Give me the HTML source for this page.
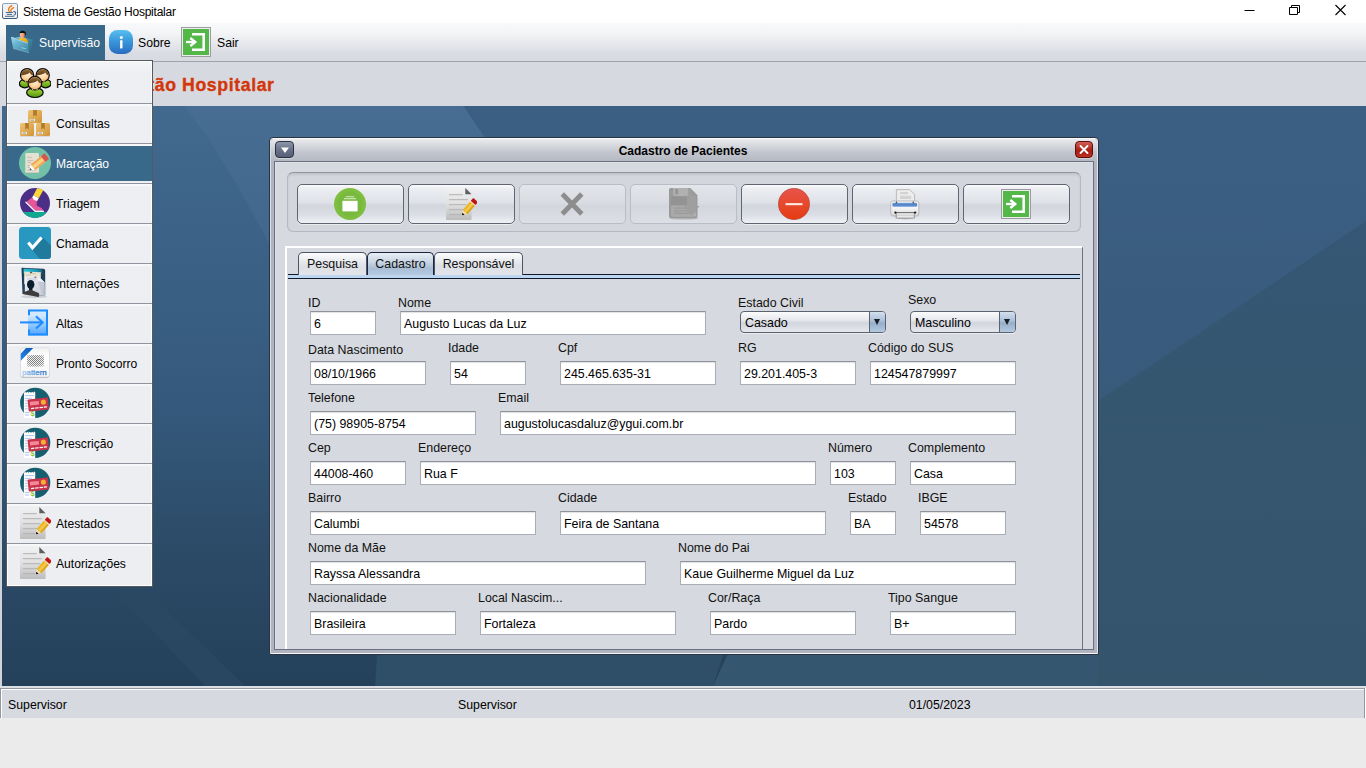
<!DOCTYPE html>
<html><head><meta charset="utf-8"><title>Sistema de Gestão Hospitalar</title>
<style>
*{box-sizing:border-box;margin:0;padding:0}
html,body{width:1366px;height:768px;overflow:hidden;background:#ebebeb;font-family:"Liberation Sans",sans-serif;font-size:12px;color:#000}
.abs{position:absolute}
#titlebar{position:absolute;left:0;top:0;width:1366px;height:23px;background:#fff}
#titlebar .t{position:absolute;left:23px;top:5px;font-size:12px;line-height:15px;color:#000;white-space:nowrap;letter-spacing:-0.24px}
#menubar{position:absolute;left:0;top:23px;width:1366px;height:39px;background:linear-gradient(#f8f9fa 0%,#f4f5f6 25%,#e6e8ec 55%,#d9dce2 80%,#d7dae0 100%);border-bottom:1px solid #9ea2ab}
#msel{position:absolute;left:6px;top:2px;width:99px;height:35px;background:#39698a}
.mtxt{position:absolute;top:13px;font-size:12.2px;line-height:15px;white-space:nowrap}
#header{position:absolute;left:0;top:62px;width:1366px;height:44px;background:#d6d9df}
#header .h{position:absolute;right:1092px;top:12px;font-size:17.7px;font-weight:bold;line-height:22px;color:#d3360b;-webkit-text-stroke:.35px #d3360b;white-space:nowrap;letter-spacing:.6px;margin-right:-.6px}
#desk{position:absolute;left:0;top:106px;width:1366px;height:580px;background:#3a5f82;overflow:hidden}
#status{position:absolute;left:0;top:686px;width:1366px;height:32px;background:#dcdfe4}
#status .in{position:absolute;left:0;top:2px;width:1365px;height:30px;background:#d6d9df;border:1px solid #93979f;border-bottom:none;box-shadow:inset 1px 1px 0 #fff,1px 0 0 #fff}
#status span{position:absolute;top:12px;font-size:12.3px;line-height:15px;white-space:nowrap}
#popup{position:absolute;left:6px;top:60px;width:147px;height:527px;background:linear-gradient(#f4f5f7 0,#eeeff3 12px,#edeef2 100%);border:1px solid #555960;box-shadow:inset 1px 1px 0 #fdfdfe,inset -1px -1px 0 #fdfdfe}
.mi{position:absolute;left:0;width:145px;height:35px}
.mi span{position:absolute;left:49px;top:11px;font-size:12.1px;line-height:15px;white-space:nowrap;color:#000}
.mi.sel{background:#39698a}
.mi.sel span{color:#fff}
.sep{position:absolute;left:0;width:145px;height:3px;background:#f7f8fa;border-top:1px solid #90949e}
.mi svg{position:absolute;left:12px;top:1px}

#frame{position:absolute;left:269px;top:137px;width:830px;height:518px;background:#b0b4c0;border:1px solid #2b3240;border-radius:4px 4px 2px 2px;box-shadow:inset 0 1px 0 #f8f9fa,inset 0 -1px 0 #f6f7f9,inset 1px 0 0 #dcdfe5,inset -1px 0 0 #e4e6eb}
#fin{position:absolute;left:-1px;top:-1px;width:830px;height:518px}
#ftitle{position:absolute;left:2px;top:2px;width:826px;height:23px;background:linear-gradient(#e9ebee 0%,#dcdee3 20%,#c4c7cf 55%,#b3b7c1 100%);border-radius:3px 3px 0 0}
#ftitle .tt{position:absolute;left:-1px;width:826px;top:5px;text-align:center;font-weight:bold;font-size:12px;line-height:14px;color:#000}
#fbody{position:absolute;left:5px;top:24px;width:820px;height:489px;background:#d6d9df;border:1px solid #6b7080;box-shadow:inset 1px 1px 0 #e0e2e7}
.sysbtn{position:absolute;top:2px;height:17px;border-radius:4px}
#fmenu{left:4px;width:19px;border:1px solid #2a3142;background:linear-gradient(#8e96aa,#6a7288 50%,#586078);box-shadow:0 1px 0 rgba(255,255,255,.35)}
#fclose{left:804px;width:18px;border:1px solid #5c0d08;background:linear-gradient(#cf6058,#b02a20 45%,#a81c12 60%,#bc3424);box-shadow:0 1px 0 rgba(255,255,255,.35)}
#tbpanel{position:absolute;left:18px;top:35px;width:794px;height:60px;border-radius:6px;border:1px solid #b4b8c0;border-top-color:#90949c;background:#d3d6dc;box-shadow:inset 0 2px 2px rgba(0,0,0,.08)}
.btn{position:absolute;top:47px;width:107px;height:40px;border:1px solid #5f6571;border-radius:5px;background:linear-gradient(#fbfbfc 0%,#eceef2 10%,#dfe2e8 45%,#d2d5dd 55%,#dcdfe6 80%,#eff1f5 100%);box-shadow:0 1px 0 rgba(255,255,255,.5)}
.btn.dis{border-color:#b9bdc6;background:linear-gradient(#e3e5ea 0%,#d9dce2 45%,#d3d6dd 55%,#dcdfe5 100%);box-shadow:none}
.btn svg{position:absolute}
#tabpane{position:absolute;left:16px;top:109px;width:798px;height:403px;border:2px solid #fff;border-bottom:none;border-right:1px solid #6f737d}
.tab{position:absolute;top:115px;height:23px;border:1px solid #4d5566;border-bottom:none;border-radius:5px 5px 0 0;background:linear-gradient(#fdfdfe 0%,#eceef1 30%,#dcdfe5 60%,#e3e5ea 100%);font-size:12.4px;line-height:14px;text-align:center;padding-top:4px;color:#111}
.tab.sel{border-color:#1b2740;background:linear-gradient(#e8eef5 0%,#c9d6e4 40%,#a9bed5 70%,#b5cbe3 100%)}
#tabline{position:absolute;left:19px;top:137px;width:792px;height:5px;background:#bcd6f0;border-top:1px solid #10182c;border-bottom:1px solid #10182c}
.combo{position:absolute;height:22px;border:1px solid #5b6270;border-radius:4px;background:linear-gradient(#fbfbfc 0%,#e6e8ed 40%,#d2d5dd 55%,#e6e8ee 100%);font-size:12.4px;line-height:14px;padding:4px 0 0 4px;box-shadow:0 1px 0 rgba(255,255,255,.5)}
.combo i{position:absolute;right:0;top:0;width:16px;height:20px;border-left:1px solid #5b6270;border-radius:0 3px 3px 0;background:linear-gradient(#d4e0ee 0%,#a9bfd8 45%,#94aeca 55%,#b4cae2 100%)}
.combo i:after{content:"";position:absolute;left:4px;top:7px;border:3.5px solid transparent;border-top:6.5px solid #1a1d24;border-bottom:none}
.lbl{position:absolute;font-size:12.4px;line-height:14px;white-space:nowrap;color:#111}
.tf{position:absolute;height:24px;background:#fff;border:1px solid #a9adb5;border-top-color:#8e929a;box-shadow:inset 0 1px 1px rgba(0,0,0,.12);font-size:12.4px;line-height:14px;padding:5px 0 0 3px;white-space:nowrap;overflow:hidden;color:#000}
</style></head><body>
<div id="titlebar"><div class="abs" style="left:2px;top:3px;width:16px;height:16px"><svg width="16" height="16" viewBox="0 0 16 16"><defs><linearGradient id="jb" x1="0" y1="0" x2="0" y2="1"><stop offset="0" stop-color="#8aa6c2"/><stop offset="1" stop-color="#3a5a78"/></linearGradient></defs>
<rect x=".5" y=".5" width="15" height="15" rx="1.500" fill="#f1f1f1" stroke="url(#jb)" stroke-width="1"/>
<path d="M9.800 2.600c-3.200 2-4.200 3.800-2.600 5.800M11.600 4.600c-2.800 1.500-3.400 2.700-2.300 4.300" stroke="#e8781a" stroke-width="1.300" fill="none" stroke-linecap="round"/>
<path d="M4.200 9.500h6.300M5.200 11.400h4.400M3.400 13.300h8.400" stroke="#4a6a8c" stroke-width="1" stroke-linecap="round"/>
<path d="M11.400 8.400c3 .2 3 3.400 0 3.800" stroke="#4a6a8c" stroke-width="1.100" fill="none"/></svg></div><div class="t">Sistema de Gestão Hospitalar</div>
<svg class="abs" style="left:1230px;top:0" width="136" height="23" viewBox="1230 0 136 23"><path d="M1244.500 10.500h10" stroke="#000" stroke-width="1"/>
<path d="M1289.500 7.500h8v7h-8zM1291.500 7.500v-2h8v7h-2" fill="none" stroke="#000" stroke-width="1"/>
<path d="M1335.500 5l10 10M1345.500 5l-10 10" stroke="#000" stroke-width="1.100"/></svg></div>
<div id="menubar"><div id="msel"></div>
<div class="abs" style="left:10px;top:7px;width:24px;height:24px"><svg width="24" height="24" viewBox="0 0 24 24"><defs>
<linearGradient id="fg" x1="0" y1="0" x2=".9" y2="1"><stop offset="0" stop-color="#a6dcf0"/><stop offset=".35" stop-color="#6ab6d2"/><stop offset="1" stop-color="#3c88a6"/></linearGradient>
<linearGradient id="fb" x1="0" y1="0" x2="1" y2="1"><stop offset="0" stop-color="#5aa4c0"/><stop offset="1" stop-color="#2a6680"/></linearGradient>
<linearGradient id="fs" x1="0" y1="0" x2="1" y2="0"><stop offset="0" stop-color="#fbc0a0"/><stop offset=".6" stop-color="#f4a27c"/><stop offset="1" stop-color="#c87850"/></linearGradient>
<linearGradient id="fy" x1="0" y1="0" x2="1" y2="1"><stop offset="0" stop-color="#ffc81e"/><stop offset="1" stop-color="#f09a00"/></linearGradient></defs>
<path d="M5.800 7.400l4.400-.6l6 1.200l6.500 1.800l-1.300 9.500l-2.300 3.400z" fill="url(#fb)"/>
<path d="M5.800 7.400l4.400-.6l5.400 1.100l-1 3z" fill="#7cc0d8"/>
<path d="M9.600 3.400c-.3-2.300 2.400-3 4.400-2.300c1.800 .6 2.200 2.200 1.700 4l-.9 .2l-.4-2.200z" fill="#0c0c0c"/>
<path d="M9.800 3.300c1.600-.5 3.200-.5 4.500-.2l.4 2.200c-.2 1.600-.8 2.600-1.500 3.100l-.2 1.200l-2 -.3l.2-1.400c-1-.8-1.500-2.400-1.400-4.600z" fill="url(#fs)"/>
<path d="M8.100 9.300l2.200-1.400l1.200 .3l1.400 1l1-1.100l1.200-.1c1.400 .8 2.400 2 2.800 3.400v1.500z" fill="url(#fy)"/>
<path d="M1 7l4.600 .9l2.900 1.850l9.400 2.950l1.200 10l-16-4.200z" fill="url(#fg)"/>
<path d="M1 7l4.600 .9l2.900 1.850l9.400 2.950l.1 .7l-9.600-3l-2.900-1.800l-4.300-.8z" fill="#c8ecf8" opacity=".75"/>
<path d="M3.100 18.500l16 4.200" stroke="#9ab4c0" stroke-width=".7" opacity=".8"/>
<path d="M11.500 17.600l4.600 1.300" stroke="#b4e0ee" stroke-width="1" opacity=".75"/></svg></div>
<div class="abs" style="left:109px;top:7px;width:24px;height:24px"><svg width="24" height="24" viewBox="0 0 24 24"><defs>
<linearGradient id="sg" x1="0" y1="0" x2="0" y2="1"><stop offset="0" stop-color="#58c0ee"/><stop offset=".45" stop-color="#3a98dc"/><stop offset="1" stop-color="#2a6cc0"/></linearGradient></defs>
<rect width="24" height="24" rx="8.500" fill="url(#sg)"/>
<circle cx="12.300" cy="7.600" r="1.500" fill="#fff"/><rect x="11.100" y="10" width="2.400" height="8.600" rx="1.200" fill="#fff"/></svg></div>
<div class="abs" style="left:181px;top:4px;width:30px;height:30px"><svg width="30" height="30" viewBox="0 0 30 30"><rect x=".5" y=".5" width="29" height="29" fill="#ececee" stroke="#9c9c9e" stroke-width="1"/>
<rect x="2" y="2" width="26" height="26" fill="#54b848"/>
<path d="M11 7.300h11.700v15.400h-11.700" fill="none" stroke="#fff" stroke-width="2.600"/>
<path d="M5 15h9" stroke="#fff" stroke-width="2.300"/><path d="M9.300 11l5 4l-5 4" fill="none" stroke="#fff" stroke-width="2.300" stroke-linejoin="miter"/></svg></div>
<div class="mtxt" style="left:39px;color:#fff">Supervisão</div>
<div class="mtxt" style="left:138px">Sobre</div>
<div class="mtxt" style="left:217px">Sair</div>
</div>
<div id="header"><div class="h">Sistema de Gestão Hospitalar</div></div>
<div id="desk"><svg width="1366" height="580" viewBox="0 106 1366 580" style="position:absolute;left:0;top:0">
<defs>
<linearGradient id="bgL" x1="0" y1="106" x2="0" y2="686" gradientUnits="userSpaceOnUse"><stop offset="0" stop-color="#426a8e"/><stop offset=".25" stop-color="#3b6286"/><stop offset=".54" stop-color="#34587a"/><stop offset=".78" stop-color="#2b4a66"/><stop offset="1" stop-color="#25415a"/></linearGradient>
<linearGradient id="bgR" x1="0" y1="106" x2="0" y2="686" gradientUnits="userSpaceOnUse"><stop offset="0" stop-color="#3b5f83"/><stop offset=".5" stop-color="#385b7c"/><stop offset="1" stop-color="#35566f"/></linearGradient>
<linearGradient id="bgR2" x1="0" y1="106" x2="0" y2="686" gradientUnits="userSpaceOnUse"><stop offset="0" stop-color="#36587a"/><stop offset=".5" stop-color="#35566f"/><stop offset="1" stop-color="#34546c"/></linearGradient>
<linearGradient id="band" x1="0" y1="106" x2="0" y2="400" gradientUnits="userSpaceOnUse"><stop offset="0" stop-color="#476e92"/><stop offset=".5" stop-color="#41688c"/><stop offset="1" stop-color="#3a6084"/></linearGradient>
</defs>
<rect x="0" y="106" width="1366" height="580" fill="url(#bgL)"/>
<polygon points="184,106 463.500,106 540,220 540,420 360,420 270,245 240,190 208,138" fill="url(#band)"/>
<polygon points="463.500,106 1366,106 1366,686 713,686 728,654 728,300 560,250" fill="url(#bgR)"/>
<polygon points="1098,401 1366,221 1366,686 1098,686" fill="url(#bgR2)"/>
<polygon points="375,686 378,640 728,640 713,686" fill="#2f4e67"/>
<polygon points="100,575 130,575 245,686 205,686" fill="#2a4962" opacity=".8"/>
<rect x="0" y="106" width="2" height="580" fill="#d0d3da"/>
</svg></div>

<div id="status"><div class="in"></div><span style="left:8px">Supervisor</span><span style="left:458px">Supervisor</span><span style="left:909px">01/05/2023</span></div>
<div id="frame"><div id="fin"><div id="ftitle"><div class="tt">Cadastro de Pacientes</div>
<div class="sysbtn" id="fmenu"><svg width="17" height="15" style="position:absolute;left:0;top:0"><path d="M5 5.500h8l-4 5.500z" fill="#fff"/></svg></div>
<div class="sysbtn" id="fclose"><svg width="16" height="15" style="position:absolute;left:0;top:0"><path d="M4.500 4l7 7M11.500 4l-7 7" stroke="#fff" stroke-width="1.900" stroke-linecap="round"/></svg></div>
</div>
<div id="fbody"></div>
<div id="tbpanel"></div>
<div class="btn" id="b1" style="left:28px"><svg style="left:36px;top:3px" width="32" height="32" viewBox="0 0 32 32"><circle cx="16" cy="16" r="16" fill="#7fbf3f"/><circle cx="16" cy="16" r="12.600" fill="#79b940"/>
<rect x="8.400" y="12.800" width="15.200" height="10.600" fill="#fff"/><rect x="10" y="10.200" width="12" height="1" fill="#dff0cf"/><rect x="11.800" y="8.200" width="8.400" height="1" fill="#cfe8b8"/></svg></div>
<div class="btn" id="b2" style="left:139px"><svg style="left:36px;top:3px" width="32" height="32" viewBox="0 0 32 32"><defs>
<linearGradient id="dg" x1="0" y1="0" x2="0" y2="1"><stop offset="0" stop-color="#f1f1f1"/><stop offset=".5" stop-color="#e0e0e0"/><stop offset="1" stop-color="#bdbdbd"/></linearGradient></defs>
<path d="M1 0h19.300l6.300 6.300v24.700a1 1 0 0 1-1 1h-23.600a1 1 0 0 1-1-1z" fill="url(#dg)"/>
<path d="M20.300 0l6.300 6.300h-6.300z" fill="#5e5e5e"/>
<path d="M4 6.700h13.800M4 11.700h19M4 16.700h17.500M4 21.700h14M4 26.700h12.500" stroke="#b2b2b2" stroke-width="1"/>
<g transform="translate(17.100,27.300) rotate(-48.500)">
<path d="M0 0l4.400-3.200v6.400z" fill="#f3ddb0"/><path d="M0 0l2.100-1.520v3.040z" fill="#0a0a0a"/>
<rect x="4.400" y="-3.200" width="11.200" height="6.400" fill="#eab625"/><rect x="4.400" y="-1.100" width="11.200" height="2.200" fill="#f2c94c"/><rect x="4.400" y="1.700" width="11.200" height="1.500" fill="#d9a21c"/>
<rect x="15.600" y="-3.200" width="1" height="6.400" fill="#f4e6c8"/><rect x="16.600" y="-3.200" width="3.800" height="6.400" rx=".7" fill="#c01414"/></g></svg></div>
<div class="btn dis" id="b3" style="left:250px"><svg style="left:36px;top:3px" width="32" height="32" viewBox="0 0 32 32"><path d="M6.300 6l19.500 20M25.800 6l-19.500 20" stroke="#8d8d8d" stroke-width="4.800"/></svg></div>
<div class="btn dis" id="b4" style="left:361px"><svg style="left:36px;top:3px" width="34" height="32" viewBox="0 0 34 32"><g transform="translate(1.300,0)">
<ellipse cx="15.500" cy="30.600" rx="15" ry=".9" fill="#a8a8a8" opacity=".7"/>
<path d="M2.500 0h19.500l7.200 7.200v21.300a1.800 1.800 0 0 1-1.800 1.800h-24.900a1.800 1.800 0 0 1-1.800-1.800v-26.700a1.800 1.800 0 0 1 1.800-1.800z" fill="#9a9a9a"/>
<path d="M4.800 0h17.200v6.600a1.300 1.300 0 0 1-1.300 1.300h-14.600a1.300 1.300 0 0 1-1.300-1.300z" fill="#b1b1b1"/><rect x="6.800" y="1" width="3.200" height="5.400" fill="#979797"/>
<rect x="19.600" y="0" width="2.400" height="7.900" fill="#9e9e9e"/>
<path d="M3 8.600h15.500v8.600h-15.500z" fill="#939393"/>
<rect x="2.800" y="17.400" width="24.600" height="11.300" rx="1" fill="#aaa"/>
<path d="M5.400 20.200h14M5.400 22.800h16M5.400 25.400h17" stroke="#9a9a9a" stroke-width="1.300"/>
<path d="M18.600 7.500h9.400v10.500h3.200l-8 10l-8-10h3.400z" fill="#9f9f9f"/><path d="M25.200 28l2.400-3.200v2.400a.8 .8 0 0 1-.8 .8z" fill="#b4b4b4"/></g></svg></div>
<div class="btn" id="b5" style="left:472px"><svg style="left:36px;top:3px" width="32" height="32" viewBox="0 0 32 32"><defs>
<linearGradient id="rg" x1="0" y1="0" x2="0" y2="1"><stop offset="0" stop-color="#e8544a"/><stop offset=".5" stop-color="#e6492e"/><stop offset="1" stop-color="#e53a12"/></linearGradient></defs>
<circle cx="16" cy="16" r="15.700" fill="url(#rg)" stroke="#b04a3a" stroke-width=".6"/><rect x="7.500" y="15.100" width="17" height="2.100" fill="#ffe9e2"/></svg></div>
<div class="btn" id="b6" style="left:583px"><svg style="left:36px;top:3px" width="32" height="32" viewBox="0 0 32 32"><defs>
<linearGradient id="prb" x1="0" y1="0" x2="0" y2="1"><stop offset="0" stop-color="#ffffff"/><stop offset=".55" stop-color="#f2f2f2"/><stop offset="1" stop-color="#d6d6d6"/></linearGradient>
<linearGradient id="prl" x1="0" y1="0" x2="0" y2="1"><stop offset="0" stop-color="#a9c6ea"/><stop offset=".35" stop-color="#4f7fc2"/><stop offset="1" stop-color="#6a9ada"/></linearGradient></defs>
<g transform="translate(.6,0)"><path d="M6.800 1.600h13.400l4.800 4.800v9h-18.200z" fill="#ececec" stroke="#b4b4b4" stroke-width=".9"/>
<path d="M10.500 4h8v2.200h-8zM10.500 7.800h11v3.200h-11z" fill="#d2d2d2"/>
<rect x="1.200" y="13" width="28" height="15" rx="2.200" fill="url(#prb)" stroke="#b2b2b2" stroke-width=".9"/>
<rect x="2.800" y="14.500" width="24.800" height="4.200" rx="1.200" fill="url(#prl)"/>
<path d="M6 15h1v-1.500M24.500 15h-1v-1.500" stroke="#333" stroke-width=".9" fill="none"/>
<path d="M6 24.600h19.400v5.800q-9.700 1.500-19.400 0z" fill="#a4a4a4"/>
<path d="M7.300 25h16.800v4.600h-16.800z" fill="#e8e8e8"/><path d="M7.300 27.200h16.800" stroke="#c8c8c8" stroke-width=".8"/>
<path d="M5.800 24.600h19.800" stroke="#6a6a6a" stroke-width="1"/><circle cx="5.800" cy="24.600" r="1.100" fill="#111"/><circle cx="25.600" cy="24.600" r="1.100" fill="#111"/></g></svg></div>
<div class="btn" id="b7" style="left:694px"><svg style="left:37px;top:4px" width="30" height="30" viewBox="0 0 30 30"><rect x=".5" y=".5" width="29" height="29" fill="#ececee" stroke="#9c9c9e" stroke-width="1"/>
<rect x="2" y="2" width="26" height="26" fill="#54b848"/>
<path d="M11 7.300h11.700v15.400h-11.700" fill="none" stroke="#fff" stroke-width="2.600"/>
<path d="M5 15h9" stroke="#fff" stroke-width="2.300"/><path d="M9.300 11l5 4l-5 4" fill="none" stroke="#fff" stroke-width="2.300" stroke-linejoin="miter"/></svg></div>
<div id="tabpane"></div>
<div id="tabline"></div>
<div class="tab" style="left:29px;width:69px">Pesquisa</div>
<div class="tab sel" style="left:98px;width:67px">Cadastro</div>
<div class="tab" style="left:165px;width:89px">Responsável</div>
<div class="combo" style="left:471px;top:174px;width:146px">Casado<i></i></div>
<div class="combo" style="left:641px;top:174px;width:106px">Masculino<i></i></div>
<div class="lbl" style="left:39px;top:159px">ID</div>
<div class="lbl" style="left:129px;top:159px">Nome</div>
<div class="lbl" style="left:469px;top:159px">Estado Civil</div>
<div class="lbl" style="left:639px;top:156px">Sexo</div>
<div class="lbl" style="left:39px;top:206px">Data Nascimento</div>
<div class="lbl" style="left:179px;top:204px">Idade</div>
<div class="lbl" style="left:289px;top:204px">Cpf</div>
<div class="lbl" style="left:469px;top:204px">RG</div>
<div class="lbl" style="left:599px;top:204px">Código do SUS</div>
<div class="lbl" style="left:39px;top:254px">Telefone</div>
<div class="lbl" style="left:229px;top:254px">Email</div>
<div class="lbl" style="left:39px;top:304px">Cep</div>
<div class="lbl" style="left:149px;top:304px">Endereço</div>
<div class="lbl" style="left:559px;top:304px">Número</div>
<div class="lbl" style="left:639px;top:304px">Complemento</div>
<div class="lbl" style="left:39px;top:354px">Bairro</div>
<div class="lbl" style="left:289px;top:354px">Cidade</div>
<div class="lbl" style="left:579px;top:354px">Estado</div>
<div class="lbl" style="left:649px;top:354px">IBGE</div>
<div class="lbl" style="left:39px;top:404px">Nome da Mãe</div>
<div class="lbl" style="left:409px;top:404px">Nome do Pai</div>
<div class="lbl" style="left:39px;top:454px">Nacionalidade</div>
<div class="lbl" style="left:209px;top:454px">Local Nascim...</div>
<div class="lbl" style="left:439px;top:454px">Cor/Raça</div>
<div class="lbl" style="left:619px;top:454px">Tipo Sangue</div>
<div class="tf" style="left:41px;top:174px;width:66px">6</div>
<div class="tf" style="left:131px;top:174px;width:306px">Augusto Lucas da Luz</div>
<div class="tf" style="left:41px;top:224px;width:116px">08/10/1966</div>
<div class="tf" style="left:181px;top:224px;width:76px">54</div>
<div class="tf" style="left:291px;top:224px;width:156px">245.465.635-31</div>
<div class="tf" style="left:471px;top:224px;width:116px">29.201.405-3</div>
<div class="tf" style="left:601px;top:224px;width:146px">124547879997</div>
<div class="tf" style="left:41px;top:274px;width:166px">(75) 98905-8754</div>
<div class="tf" style="left:231px;top:274px;width:516px">augustolucasdaluz@ygui.com.br</div>
<div class="tf" style="left:41px;top:324px;width:96px">44008-460</div>
<div class="tf" style="left:151px;top:324px;width:396px">Rua F</div>
<div class="tf" style="left:561px;top:324px;width:66px">103</div>
<div class="tf" style="left:641px;top:324px;width:106px">Casa</div>
<div class="tf" style="left:41px;top:374px;width:226px">Calumbi</div>
<div class="tf" style="left:291px;top:374px;width:266px">Feira de Santana</div>
<div class="tf" style="left:581px;top:374px;width:46px">BA</div>
<div class="tf" style="left:651px;top:374px;width:86px">54578</div>
<div class="tf" style="left:41px;top:424px;width:336px">Rayssa Alessandra</div>
<div class="tf" style="left:411px;top:424px;width:336px">Kaue Guilherme Miguel da Luz</div>
<div class="tf" style="left:41px;top:474px;width:146px">Brasileira</div>
<div class="tf" style="left:211px;top:474px;width:196px">Fortaleza</div>
<div class="tf" style="left:441px;top:474px;width:146px">Pardo</div>
<div class="tf" style="left:621px;top:474px;width:126px">B+</div>
</div></div>
<div id="popup"><div class="mi" style="top:5px"><svg width="32" height="32" viewBox="0 0 32 32"><defs>
<radialGradient id="pf" cx=".5" cy=".4" r=".65"><stop offset="0" stop-color="#fff2dc"/><stop offset=".5" stop-color="#ffd8a4"/><stop offset="1" stop-color="#f0a458"/></radialGradient>
<linearGradient id="pg" x1="0" y1="0" x2="0" y2="1"><stop offset="0" stop-color="#b4de3c"/><stop offset="1" stop-color="#4f9410"/></linearGradient>
<linearGradient id="ph" x1="0" y1="0" x2="0" y2="1"><stop offset="0" stop-color="#8f6636"/><stop offset="1" stop-color="#5e3d1c"/></linearGradient></defs>
<g stroke="#0a0a0a" stroke-width="1.200">
<ellipse cx="5.800" cy="16.600" rx="5.400" ry="4.200" fill="url(#pg)"/><ellipse cx="26.600" cy="16.600" rx="5.400" ry="4.200" fill="url(#pg)"/>
<circle cx="8.100" cy="8.200" r="6.600" fill="url(#pf)"/><circle cx="23.700" cy="8.200" r="6.600" fill="url(#pf)"/></g>
<path d="M2.00 8.50A6.1 6.1 0 1 1 14.20 8.50C12.70 8.00 11.30 7.00 10.70 5.50C9.10 7.30 5.10 8.10 2.00 8.50z" fill="url(#ph)"/><path d="M17.60 8.50A6.1 6.1 0 1 1 29.80 8.50C28.30 8.00 26.90 7.00 26.30 5.50C24.70 7.30 20.70 8.10 17.60 8.50z" fill="url(#ph)"/>
<path d="M6.200 13.800l1 1.300M9.800 13.800l-.8 1.300M25.600 13.800l-1 1.300" stroke="#e8f0d0" stroke-width=".9"/>
<g stroke="#0a0a0a" stroke-width="1.200"><ellipse cx="15.900" cy="25.600" rx="8.300" ry="4.900" fill="url(#pg)"/>
<circle cx="15.900" cy="16.200" r="6.800" fill="url(#pf)"/></g>
<path d="M9.60 16.50A6.3 6.3 0 1 1 22.20 16.50C20.50 16.00 19.10 15.00 18.50 13.50C16.90 15.30 12.90 16.10 9.60 16.50z" fill="url(#ph)"/>
<path d="M13 21.700l1.300 1.500M18.800 21.700l-1.300 1.500" stroke="#e8f0d0" stroke-width="1"/>
</svg><span>Pacientes</span></div>
<div class="sep" style="top:42px"></div>
<div class="mi" style="top:45px"><svg width="32" height="32" viewBox="0 0 32 32"><defs>
<linearGradient id="bx" x1="0" y1="0" x2="1" y2="1"><stop offset="0" stop-color="#ecc478"/><stop offset=".5" stop-color="#e0ac54"/><stop offset="1" stop-color="#cf9436"/></linearGradient></defs>
<rect x="1" y="28.400" width="30" height="1.400" rx=".7" fill="#c8c8cc" opacity=".7"/><g transform="translate(9,3)"><rect x="0" y="0" width="14" height="13" rx="1.5" fill="url(#bx)"/>
<path d="M5.200 0h3.600v6.400l-1.800-1.400l-1.800 1.400z" fill="#b07a2c"/>
<rect x="1.800" y="9" width="5.200" height="2.200" fill="#f4f0e8"/><rect x="2.600" y="9.600" width="3.600" height="1" fill="#909090"/></g><g transform="translate(1,16)"><rect x="0" y="0" width="14" height="13" rx="1.5" fill="url(#bx)"/>
<path d="M5.200 0h3.600v6.400l-1.800-1.400l-1.800 1.400z" fill="#b07a2c"/>
<rect x="1.800" y="9" width="5.200" height="2.200" fill="#f4f0e8"/><rect x="2.600" y="9.600" width="3.600" height="1" fill="#909090"/></g><g transform="translate(17,16)"><rect x="0" y="0" width="14" height="13" rx="1.5" fill="url(#bx)"/>
<path d="M5.200 0h3.600v6.400l-1.800-1.400l-1.800 1.400z" fill="#b07a2c"/>
<rect x="1.800" y="9" width="5.200" height="2.200" fill="#f4f0e8"/><rect x="2.600" y="9.600" width="3.600" height="1" fill="#909090"/></g></svg><span>Consultas</span></div>
<div class="sep" style="top:82px"></div>
<div class="mi sel" style="top:85px"><svg width="32" height="32" viewBox="0 0 32 32"><circle cx="16" cy="16" r="16" fill="#73c0a8"/>
<rect x="6.300" y="6" width="13.700" height="20" rx="1.200" fill="#e6e2d3"/><rect x="6.300" y="25" width="13.700" height="1" rx=".5" fill="#cfc9b6"/>
<path d="M8.300 10.400h4.600M8.300 13.400h6M8.300 15.400h4M8.300 18.400h3M8.300 20.400h2.500M8.300 23.400h8" stroke="#b9b6aa" stroke-width=".8"/>
<g transform="translate(10.600,23) rotate(-38.800)">
<path d="M0 0l4.200-3.600v7.200z" fill="#fff"/><path d="M0 0l1.700-1.450v2.900z" fill="#3b4a6b"/>
<rect x="4.200" y="-3.600" width="13.800" height="7.200" fill="#f5d27e"/><rect x="4.200" y="-3.600" width="13.800" height="1.900" fill="#f0a35a"/><rect x="4.200" y="1.700" width="13.800" height="1.900" fill="#f0a35a"/>
<path d="M4.200 -3.600 q-1.600 1.800 0 3.600 q-1.600 1.800 0 3.600" fill="#fff" stroke="none"/>
<rect x="17.400" y="-3.600" width="4.800" height="7.200" rx=".9" fill="#d9534f"/></g></svg><span>Marcação</span></div>
<div class="sep" style="top:122px"></div>
<div class="mi" style="top:125px"><svg width="32" height="32" viewBox="0 0 32 32"><defs><clipPath id="tc"><circle cx="16" cy="16" r="15"/></clipPath></defs>
<g clip-path="url(#tc)"><rect width="32" height="32" fill="#4b2f86"/><rect y="25" width="32" height="8" fill="#10a98f"/>
<path d="M18.700 0.300l6 2.300l-5 8.600l-5.300-3z" fill="#fdd835"/>
<path d="M14.400 8.200l5.300 3l-1.800 3.200l-4-1l-1-2.600z" fill="#fff"/>
<path d="M7.700 14.700l5.600-4.500l1.600 2.800l2.700 .8l.4 5l5 2.400l1 2.400h-7.800z" fill="#e8559b"/>
<path d="M16.600 14.400l1.200 4.500l-1.400 .4z" fill="#d2448a"/>
<path d="M7 15.200l9.100 9h8.200" stroke="#f4f0fa" stroke-width="1.500" fill="none" stroke-linecap="round" stroke-linejoin="round"/></g></svg><span>Triagem</span></div>
<div class="sep" style="top:162px"></div>
<div class="mi" style="top:165px"><svg width="32" height="32" viewBox="0 0 32 32"><defs><clipPath id="cc"><rect width="32" height="32" rx="3.500"/></clipPath></defs>
<g clip-path="url(#cc)"><rect width="32" height="32" fill="#2898c1"/>
<path d="M13.300 22.700l10.600-12.200l12 12v12h-13z" fill="#1f7a9b"/>
<path d="M9.300 15.600l4.200 5.200l9.100-10.300" stroke="#fff" stroke-width="3.200" fill="none" stroke-linecap="butt" stroke-linejoin="miter"/></g></svg><span>Chamada</span></div>
<div class="sep" style="top:202px"></div>
<div class="mi" style="top:205px"><svg width="32" height="32" viewBox="0 0 32 32"><defs>
<linearGradient id="ib" x1="0" y1="0" x2="1" y2="0"><stop offset="0" stop-color="#16324a"/><stop offset=".15" stop-color="#2a5068"/><stop offset="1" stop-color="#1d4058"/></linearGradient>
<linearGradient id="ic" x1="0" y1="0" x2="1" y2="0"><stop offset="0" stop-color="#28c4dc"/><stop offset=".7" stop-color="#1a9ab4"/><stop offset="1" stop-color="#1a6a88"/></linearGradient>
<linearGradient id="iw" x1="0" y1="0" x2="1" y2="1"><stop offset="0" stop-color="#f4f6fa"/><stop offset="1" stop-color="#c4c8d4"/></linearGradient></defs>
<ellipse cx="15" cy="29.600" rx="13" ry="1.700" fill="#b8bcc4" opacity=".6"/>
<path d="M2.500 .8l22 .9l1.700 1v25.600l-2.200 .4l-20.500-1.700z" fill="url(#ib)"/>
<path d="M4.600 1.800l18.400 .8v4h-18.400z" fill="url(#ic)"/>
<path d="M5.200 4.600l16.600 .6v11.800h-16.600z" fill="#e8e4d2"/>
<path d="M10.500 6.200l1.500-1.800l1.500 1.800z" fill="#444"/><path d="M13 6.700h4M7 8.200h5" stroke="#bdb9a6" stroke-width=".7"/>
<path d="M5.800 9.800l12.800 -1l7 6.400l.3 13.200l-1.800 .3l-18.200-1.600z" fill="url(#iw)"/>
<path d="M18.600 8.800l.2 5.400l6.800 1z" fill="#eef0f6"/><path d="M18.600 14.200l7 1l.3 13.200l-1.800 .3z" fill="#b6bac8" opacity=".55"/>
<path d="M8 11.200h9M8 12.800h9" stroke="#c4c8d0" stroke-width=".7"/><rect x="15.600" y="9.700" width="1.700" height=".9" fill="#333"/>
<ellipse cx="11.700" cy="17.500" rx="3.700" ry="4.600" fill="#0c1b2b"/><path d="M10 21h3.400v3h-3.400z" fill="#0c1b2b"/>
<path d="M3.800 27l.4-1.400l7.400-3.200l8.400 3.800l.2 3.400l-1 .3z" fill="#3c3c3e"/></svg><span>Internações</span></div>
<div class="sep" style="top:242px"></div>
<div class="mi" style="top:245px"><svg width="32" height="32" viewBox="0 0 32 32"><defs>
<linearGradient id="ag" x1="0" y1="0" x2="0" y2="1"><stop offset="0" stop-color="#d6ebff"/><stop offset=".25" stop-color="#cfe7ff"/><stop offset="1" stop-color="#4da3ff"/></linearGradient></defs>
<rect x="9" y="2.400" width="20" height="26" fill="url(#ag)"/>
<path d="M10 8.200v-4.800h18v24h-18v-4.800" fill="none" stroke="#1a8cff" stroke-width="2"/>
<path d="M1 15.400h22" stroke="#1a8cff" stroke-width="2"/><path d="M17 9.200l6.600 6.200l-6.600 6.200" fill="none" stroke="#1a8cff" stroke-width="2"/></svg><span>Altas</span></div>
<div class="sep" style="top:282px"></div>
<div class="mi" style="top:285px"><svg width="32" height="32" viewBox="0 0 32 32"><defs>
<linearGradient id="pw" x1="0" y1="0" x2="0" y2="1"><stop offset="0" stop-color="#f2f2f2"/><stop offset=".3" stop-color="#fff"/><stop offset="1" stop-color="#f4f4f4"/></linearGradient>
<linearGradient id="pb" x1="1" y1="0" x2="0" y2="1"><stop offset="0" stop-color="#0a58b8"/><stop offset="1" stop-color="#2a8ae8"/></linearGradient>
<linearGradient id="pt" x1="0" y1="0" x2="1" y2="0"><stop offset="0" stop-color="#a8ccf4"/><stop offset=".5" stop-color="#5a98dc"/><stop offset="1" stop-color="#2068b8"/></linearGradient>
<pattern id="chk" width="2" height="2" patternUnits="userSpaceOnUse"><rect width="1" height="1" fill="#777"/><rect x="1" y="1" width="1" height="1" fill="#777"/></pattern>
<radialGradient id="pfade" cx=".5" cy=".5" r=".75"><stop offset="0" stop-color="#fff" stop-opacity="0"/><stop offset=".6" stop-color="#fff" stop-opacity=".15"/><stop offset="1" stop-color="#fff" stop-opacity=".75"/></radialGradient>
<clipPath id="pcl"><rect x="1.500" y="1" width="29" height="29" rx="2.800"/></clipPath></defs>
<rect x="1.500" y="1.800" width="29" height="29" rx="2.800" fill="#8e8e92" opacity=".8"/>
<rect x="1.500" y="1" width="29" height="29" rx="2.800" fill="url(#pw)" stroke="#d8d8dc" stroke-width=".6"/>
<path d="M7 1h7.200l-12.700 13v-7z" fill="url(#pb)" clip-path="url(#pcl)"/>
<rect x="8" y="8" width="17" height="11.500" fill="#f2f2f2"/><rect x="8" y="8" width="17" height="11.500" fill="url(#chk)"/><rect x="8" y="8" width="17" height="11.500" fill="url(#pfade)"/>
<text x="3.200" y="27.800" font-family="Liberation Sans, sans-serif" font-size="7.800" fill="url(#pt)" stroke="url(#pt)" stroke-width=".25" textLength="24.500" lengthAdjust="spacingAndGlyphs">pattern</text></svg><span>Pronto Socorro</span></div>
<div class="sep" style="top:322px"></div>
<div class="mi" style="top:325px"><svg width="32" height="32" viewBox="0 0 32 32">
<circle cx="16.200" cy="15.800" r="15.100" fill="#155f70"/>
<path d="M5 6l1 -1.200l1.200 1l1.200-1l1.200 1l1.200-1l1.200 1l1.200-1l1.200 1l1-1.200l.8 .4v26h-11.400z" fill="#fdfdfe"/>
<path d="M5.800 8.600h9.200M5.800 11.400h7M5.800 13.800h3M5.800 16.400h3M5.800 19h3M5.800 21.800h3M5.800 25.600h4.400M5.800 28h4.400" stroke="#b4c2ea" stroke-width="1"/>
<text x="11.400" y="29.400" font-family="Liberation Sans, sans-serif" font-size="7.500" font-weight="bold" fill="#8cc63f">$</text>
<g transform="rotate(-6 19 17)"><rect x="9" y="11.500" width="20.500" height="12" rx="1" fill="#c8324b"/>
<rect x="11" y="14" width="9" height="3.600" fill="#f28b98"/><circle cx="24.500" cy="15.800" r="2.600" fill="#f2b134"/>
<path d="M11.500 20.800h16" stroke="#fff" stroke-width="1.200" stroke-dasharray="3.400 .9"/></g></svg><span>Receitas</span></div>
<div class="sep" style="top:362px"></div>
<div class="mi" style="top:365px"><svg width="32" height="32" viewBox="0 0 32 32">
<circle cx="16.200" cy="15.800" r="15.100" fill="#155f70"/>
<path d="M5 6l1 -1.200l1.200 1l1.200-1l1.200 1l1.200-1l1.200 1l1.200-1l1.200 1l1-1.200l.8 .4v26h-11.400z" fill="#fdfdfe"/>
<path d="M5.800 8.600h9.200M5.800 11.400h7M5.800 13.800h3M5.800 16.400h3M5.800 19h3M5.800 21.800h3M5.800 25.600h4.400M5.800 28h4.400" stroke="#b4c2ea" stroke-width="1"/>
<text x="11.400" y="29.400" font-family="Liberation Sans, sans-serif" font-size="7.500" font-weight="bold" fill="#8cc63f">$</text>
<g transform="rotate(-6 19 17)"><rect x="9" y="11.500" width="20.500" height="12" rx="1" fill="#c8324b"/>
<rect x="11" y="14" width="9" height="3.600" fill="#f28b98"/><circle cx="24.500" cy="15.800" r="2.600" fill="#f2b134"/>
<path d="M11.500 20.800h16" stroke="#fff" stroke-width="1.200" stroke-dasharray="3.400 .9"/></g></svg><span>Prescrição</span></div>
<div class="sep" style="top:402px"></div>
<div class="mi" style="top:405px"><svg width="32" height="32" viewBox="0 0 32 32">
<circle cx="16.200" cy="15.800" r="15.100" fill="#155f70"/>
<path d="M5 6l1 -1.200l1.200 1l1.200-1l1.200 1l1.200-1l1.200 1l1.200-1l1.200 1l1-1.200l.8 .4v26h-11.400z" fill="#fdfdfe"/>
<path d="M5.800 8.600h9.200M5.800 11.400h7M5.800 13.800h3M5.800 16.400h3M5.800 19h3M5.800 21.800h3M5.800 25.600h4.400M5.800 28h4.400" stroke="#b4c2ea" stroke-width="1"/>
<text x="11.400" y="29.400" font-family="Liberation Sans, sans-serif" font-size="7.500" font-weight="bold" fill="#8cc63f">$</text>
<g transform="rotate(-6 19 17)"><rect x="9" y="11.500" width="20.500" height="12" rx="1" fill="#c8324b"/>
<rect x="11" y="14" width="9" height="3.600" fill="#f28b98"/><circle cx="24.500" cy="15.800" r="2.600" fill="#f2b134"/>
<path d="M11.500 20.800h16" stroke="#fff" stroke-width="1.200" stroke-dasharray="3.400 .9"/></g></svg><span>Exames</span></div>
<div class="sep" style="top:442px"></div>
<div class="mi" style="top:445px"><svg width="32" height="32" viewBox="0 0 32 32"><defs>
<linearGradient id="dg" x1="0" y1="0" x2="0" y2="1"><stop offset="0" stop-color="#f1f1f1"/><stop offset=".5" stop-color="#e0e0e0"/><stop offset="1" stop-color="#bdbdbd"/></linearGradient></defs>
<path d="M1 0h19.300l6.300 6.300v24.700a1 1 0 0 1-1 1h-23.600a1 1 0 0 1-1-1z" fill="url(#dg)"/>
<path d="M20.300 0l6.300 6.300h-6.300z" fill="#5e5e5e"/>
<path d="M4 6.700h13.800M4 11.700h19M4 16.700h17.500M4 21.700h14M4 26.700h12.500" stroke="#b2b2b2" stroke-width="1"/>
<g transform="translate(17.100,27.300) rotate(-48.500)">
<path d="M0 0l4.400-3.200v6.400z" fill="#f3ddb0"/><path d="M0 0l2.100-1.520v3.040z" fill="#0a0a0a"/>
<rect x="4.400" y="-3.200" width="11.200" height="6.400" fill="#eab625"/><rect x="4.400" y="-1.100" width="11.200" height="2.200" fill="#f2c94c"/><rect x="4.400" y="1.700" width="11.200" height="1.500" fill="#d9a21c"/>
<rect x="15.600" y="-3.200" width="1" height="6.400" fill="#f4e6c8"/><rect x="16.600" y="-3.200" width="3.800" height="6.400" rx=".7" fill="#c01414"/></g></svg><span>Atestados</span></div>
<div class="sep" style="top:482px"></div>
<div class="mi" style="top:485px"><svg width="32" height="32" viewBox="0 0 32 32"><defs>
<linearGradient id="dg" x1="0" y1="0" x2="0" y2="1"><stop offset="0" stop-color="#f1f1f1"/><stop offset=".5" stop-color="#e0e0e0"/><stop offset="1" stop-color="#bdbdbd"/></linearGradient></defs>
<path d="M1 0h19.300l6.300 6.300v24.700a1 1 0 0 1-1 1h-23.600a1 1 0 0 1-1-1z" fill="url(#dg)"/>
<path d="M20.300 0l6.300 6.300h-6.300z" fill="#5e5e5e"/>
<path d="M4 6.700h13.800M4 11.700h19M4 16.700h17.500M4 21.700h14M4 26.700h12.500" stroke="#b2b2b2" stroke-width="1"/>
<g transform="translate(17.100,27.300) rotate(-48.500)">
<path d="M0 0l4.400-3.200v6.400z" fill="#f3ddb0"/><path d="M0 0l2.100-1.520v3.040z" fill="#0a0a0a"/>
<rect x="4.400" y="-3.200" width="11.200" height="6.400" fill="#eab625"/><rect x="4.400" y="-1.100" width="11.200" height="2.200" fill="#f2c94c"/><rect x="4.400" y="1.700" width="11.200" height="1.500" fill="#d9a21c"/>
<rect x="15.600" y="-3.200" width="1" height="6.400" fill="#f4e6c8"/><rect x="16.600" y="-3.200" width="3.800" height="6.400" rx=".7" fill="#c01414"/></g></svg><span>Autorizações</span></div></div>
</body></html>
